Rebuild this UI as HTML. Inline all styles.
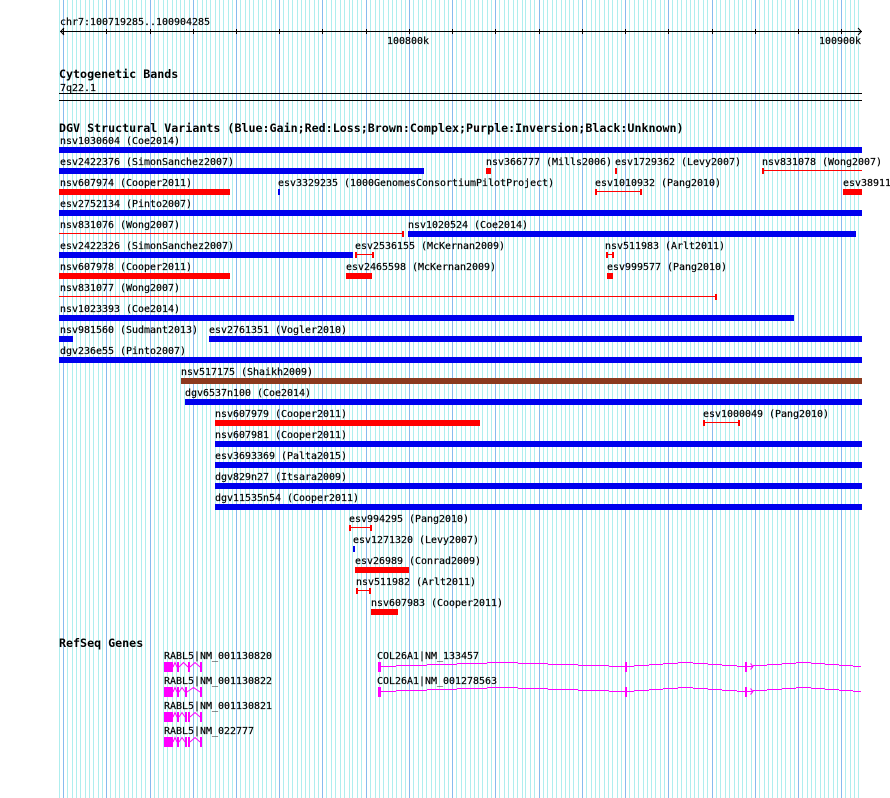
<!DOCTYPE html>
<html><head><meta charset="utf-8"><style>
html,body{margin:0;padding:0;background:#fff}
svg{display:block}
text{font-family:"DejaVu Sans Mono","Liberation Mono",monospace;font-size:9.97px;fill:#000;stroke:#000;stroke-width:.2;white-space:pre}
text.b{font-weight:bold;font-size:11.67px;stroke-width:0}
</style></head><body>
<svg width="890" height="798" viewBox="0 0 890 798" xmlns="http://www.w3.org/2000/svg">
<g shape-rendering="crispEdges">
<path fill="none" stroke="#afeeee" d="M59.5 0V798M72.5 0V798M80.5 0V798M89.5 0V798M98.5 0V798M115.5 0V798M124.5 0V798M132.5 0V798M141.5 0V798M158.5 0V798M167.5 0V798M176.5 0V798M184.5 0V798M202.5 0V798M210.5 0V798M219.5 0V798M228.5 0V798M245.5 0V798M253.5 0V798M262.5 0V798M271.5 0V798M288.5 0V798M297.5 0V798M305.5 0V798M314.5 0V798M331.5 0V798M340.5 0V798M349.5 0V798M357.5 0V798M375.5 0V798M383.5 0V798M392.5 0V798M401.5 0V798M418.5 0V798M426.5 0V798M435.5 0V798M444.5 0V798M461.5 0V798M470.5 0V798M478.5 0V798M487.5 0V798M504.5 0V798M513.5 0V798M522.5 0V798M530.5 0V798M547.5 0V798M556.5 0V798M565.5 0V798M573.5 0V798M591.5 0V798M599.5 0V798M608.5 0V798M617.5 0V798M634.5 0V798M643.5 0V798M651.5 0V798M660.5 0V798M677.5 0V798M686.5 0V798M694.5 0V798M703.5 0V798M720.5 0V798M729.5 0V798M738.5 0V798M746.5 0V798M764.5 0V798M772.5 0V798M781.5 0V798M790.5 0V798M807.5 0V798M815.5 0V798M824.5 0V798M833.5 0V798M850.5 0V798M858.5 0V798
M67.5 0V798M76.5 0V798M85.5 0V798M93.5 0V798M102.5 0V798M110.5 0V798M119.5 0V798M128.5 0V798M136.5 0V798M145.5 0V798M154.5 0V798M163.5 0V798M172.5 0V798M180.5 0V798M189.5 0V798M197.5 0V798M206.5 0V798M215.5 0V798M223.5 0V798M232.5 0V798M240.5 0V798M249.5 0V798M258.5 0V798M266.5 0V798M275.5 0V798M283.5 0V798M292.5 0V798M301.5 0V798M309.5 0V798M318.5 0V798M326.5 0V798M335.5 0V798M344.5 0V798M352.5 0V798M361.5 0V798M370.5 0V798M379.5 0V798M388.5 0V798M396.5 0V798M405.5 0V798M413.5 0V798M422.5 0V798M431.5 0V798M439.5 0V798M448.5 0V798M456.5 0V798M465.5 0V798M474.5 0V798M482.5 0V798M491.5 0V798M499.5 0V798M508.5 0V798M517.5 0V798M525.5 0V798M534.5 0V798M543.5 0V798M552.5 0V798M561.5 0V798M569.5 0V798M578.5 0V798M586.5 0V798M595.5 0V798M604.5 0V798M612.5 0V798M621.5 0V798M629.5 0V798M638.5 0V798M647.5 0V798M655.5 0V798M664.5 0V798M672.5 0V798M681.5 0V798M690.5 0V798M698.5 0V798M707.5 0V798M716.5 0V798M725.5 0V798M734.5 0V798M742.5 0V798M751.5 0V798M759.5 0V798M768.5 0V798M777.5 0V798M785.5 0V798M794.5 0V798M802.5 0V798M811.5 0V798M820.5 0V798M828.5 0V798M837.5 0V798M845.5 0V798M854.5 0V798"/>
<path fill="none" stroke="#88bbee" d="M63.5 0V798M106.5 0V798M150.5 0V798M193.5 0V798M236.5 0V798M279.5 0V798M322.5 0V798M366.5 0V798M409.5 0V798M452.5 0V798M495.5 0V798M539.5 0V798M582.5 0V798M625.5 0V798M668.5 0V798M712.5 0V798M755.5 0V798M798.5 0V798M841.5 0V798"/>
<path fill="#000" d="M60 31h802v1H60zM59 93h803v1H59zM59 100h803v1H59z"/>
<path fill="none" stroke="#000" d="M63.5 29V34M106.5 29V34M150.5 29V34M193.5 29V34M236.5 29V34M279.5 29V34M322.5 29V34M366.5 29V34M409.5 29V34M452.5 29V34M495.5 29V34M539.5 29V34M582.5 29V34M625.5 29V34M668.5 29V34M712.5 29V34M755.5 29V34M798.5 29V34M841.5 29V34"/>
<!-- blue -->
<path fill="#0000ee" d="M59 147h803v6H59zM59 168h365v6H59zM278 189h2v6h-2zM59 210h803v6H59zM408 231h448v6H408zM59 252h294v6H59zM59 315h735v6H59zM59 336h14v6H59zM209 336h653v6H209zM59 357h803v6H59zM185 399h677v6H185zM215 441h647v6H215zM215 462h647v6H215zM215 483h647v6H215zM215 504h647v6H215zM353 546h2v6h-2z"/>
<!-- red -->
<path fill="#ff0000" d="M486 168h5v6h-5zM615 168h2v6h-2zM762 168h2v6h-2zM762 170h100v1H762zM59 189h171v6H59zM595 189h2v6h-2zM640 189h2v6h-2zM595 191h47v1H595zM843 189h19v6h-19zM402 231h2v6h-2zM59 233h345v1H59zM355 252h2v6h-2zM372 252h2v6h-2zM355 254h19v1H355zM606 252h2v6h-2zM612 252h2v6h-2zM606 254h8v1H606zM59 273h171v6H59zM346 273h26v6H346zM607 273h6v6H607zM715 294h2v6h-2zM59 296h658v1H59zM215 420h265v6H215zM703 420h2v6h-2zM738 420h2v6h-2zM703 422h37v1H703zM349 525h2v6h-2zM370 525h2v6h-2zM349 527h23v1H349zM355 567h54v6H355zM356 588h2v6h-2zM369 588h2v6h-2zM356 590h15v1H356zM371 609h27v6H371z"/>
<path fill="#8b3a1e" d="M181 378h681v6H181z"/>
<!-- genes -->
<path fill="#ff00ff" d="M164 662h9v10h-9zM177 662h2v10h-2zM188 662h2v10h-2zM200 662h2v10h-2zM164 687h9v10h-9zM177 687h2v10h-2zM185 687h2v10h-2zM200 687h2v10h-2zM164 712h9v10h-9zM177 712h2v10h-2zM185 712h2v10h-2zM188 712h2v10h-2zM200 712h2v10h-2zM164 737h9v10h-9zM177 737h2v10h-2zM185 737h2v10h-2zM188 737h2v10h-2zM200 737h2v10h-2z
M378 662h3v10h-3zM625 662h2v10h-2zM745 662h2v10h-2zM378 687h3v10h-3zM625 687h2v10h-2zM745 687h2v10h-2z
M381 666h15v1h-15zM396 665h31v1h-31zM427 664h30v1h-30zM457 663h30v1h-30zM487 662h31v1h-31zM518 663h30v1h-30zM548 664h30v1h-30zM578 665h31v1h-31zM609 666h25v1h-25zM634 665h15v1h-15zM649 664h14v1h-14zM663 663h15v1h-15zM678 662h15v1h-15zM693 663h15v1h-15zM708 664h14v1h-14zM722 665h15v1h-15zM737 666h16v1h-16zM753 665h14v1h-14zM767 664h15v1h-15zM782 663h14v1h-14zM796 662h15v1h-15zM811 663h14v1h-14zM825 664h14v1h-14zM839 665h14v1h-14zM853 666h8v1h-8z
M381 691h15v1h-15zM396 690h31v1h-31zM427 689h30v1h-30zM457 688h30v1h-30zM487 687h31v1h-31zM518 688h30v1h-30zM548 689h30v1h-30zM578 690h31v1h-31zM609 691h25v1h-25zM634 690h15v1h-15zM649 689h14v1h-14zM663 688h15v1h-15zM678 687h15v1h-15zM693 688h15v1h-15zM708 689h14v1h-14zM722 690h15v1h-15zM737 691h16v1h-16zM753 690h14v1h-14zM767 689h15v1h-15zM782 688h14v1h-14zM796 687h15v1h-15zM811 688h14v1h-14zM825 689h14v1h-14zM839 690h14v1h-14zM853 691h8v1h-8z"/>
</g>
<g fill="none" stroke="#ff00ff" stroke-width="1">
<path d="M173 667L175 662.500L177 667M179 667L183.500 662.500L188 667M190 667L195 662.500L200 667"/>
<path d="M173 692L175 687.500L177 692M179 692L182 687.500L185 692M187 692L193.500 687.500L200 692"/>
<path d="M173 717L175 712.500L177 717M179 717L182 712.500L185 717M190 717L195 712.500L200 717"/>
<path d="M173 742L175 737.500L177 742M179 742L182 737.500L185 742M190 742L195 737.500L200 742"/>
<path d="M750.500 663.500L753 666.500L750.500 669.500M750.500 688.500L753 691.500L750.500 694.500"/>
</g>
<path fill="none" stroke="#000" d="M64 28L60.700 31.500L64 35M858 28L861.300 31.500L858 35"/>

<text x="60" y="25">chr7:100719285..100904285</text>
<text x="387" y="44">100800k</text>
<text x="819" y="44">100900k</text>
<text class="b" x="59" y="78">Cytogenetic Bands</text>
<text x="60" y="91">7q22.1</text>
<text class="b" x="59" y="132">DGV Structural Variants (Blue:Gain;Red:Loss;Brown:Complex;Purple:Inversion;Black:Unknown)</text>

<text x="60" y="144">nsv1030604 (Coe2014)</text>
<text x="60" y="165">esv2422376 (SimonSanchez2007)</text>
<text x="486" y="165">nsv366777 (Mills2006)</text>
<text x="615" y="165">esv1729362 (Levy2007)</text>
<text x="762" y="165">nsv831078 (Wong2007)</text>
<text x="60" y="186">nsv607974 (Cooper2011)</text>
<text x="278" y="186">esv3329235 (1000GenomesConsortiumPilotProject)</text>
<text x="595" y="186">esv1010932 (Pang2010)</text>
<text x="843" y="186">esv38911</text>
<text x="60" y="207">esv2752134 (Pinto2007)</text>
<text x="60" y="228">nsv831076 (Wong2007)</text>
<text x="408" y="228">nsv1020524 (Coe2014)</text>
<text x="60" y="249">esv2422326 (SimonSanchez2007)</text>
<text x="355" y="249">esv2536155 (McKernan2009)</text>
<text x="605" y="249">nsv511983 (Arlt2011)</text>
<text x="60" y="270">nsv607978 (Cooper2011)</text>
<text x="346" y="270">esv2465598 (McKernan2009)</text>
<text x="607" y="270">esv999577 (Pang2010)</text>
<text x="60" y="291">nsv831077 (Wong2007)</text>
<text x="60" y="312">nsv1023393 (Coe2014)</text>
<text x="60" y="333">nsv981560 (Sudmant2013)</text>
<text x="209" y="333">esv2761351 (Vogler2010)</text>
<text x="60" y="354">dgv236e55 (Pinto2007)</text>
<text x="181" y="375">nsv517175 (Shaikh2009)</text>
<text x="185" y="396">dgv6537n100 (Coe2014)</text>
<text x="215" y="417">nsv607979 (Cooper2011)</text>
<text x="703" y="417">esv1000049 (Pang2010)</text>
<text x="215" y="438">nsv607981 (Cooper2011)</text>
<text x="215" y="459">esv3693369 (Palta2015)</text>
<text x="215" y="480">dgv829n27 (Itsara2009)</text>
<text x="215" y="501">dgv11535n54 (Cooper2011)</text>
<text x="349" y="522">esv994295 (Pang2010)</text>
<text x="353" y="543">esv1271320 (Levy2007)</text>
<text x="355" y="564">esv26989 (Conrad2009)</text>
<text x="356" y="585">nsv511982 (Arlt2011)</text>
<text x="371" y="606">nsv607983 (Cooper2011)</text>

<text class="b" x="59" y="647">RefSeq Genes</text>
<text x="164" y="659">RABL5|NM_001130820</text>
<text x="164" y="684">RABL5|NM_001130822</text>
<text x="164" y="709">RABL5|NM_001130821</text>
<text x="164" y="734">RABL5|NM_022777</text>
<text x="377" y="659">COL26A1|NM_133457</text>
<text x="377" y="684">COL26A1|NM_001278563</text>
</svg>
</body></html>
